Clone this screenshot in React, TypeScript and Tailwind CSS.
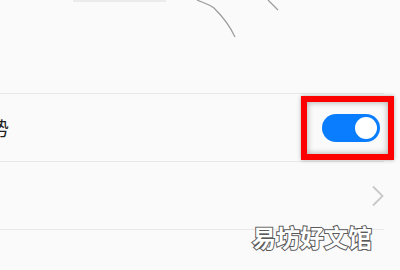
export default function App() {
    return (
        <div className="relative w-[400px] h-[270px] overflow-hidden bg-[#fafafa] font-['Noto_Sans_CJK_SC','Noto_Sans',sans-serif]">
            {/* top illustration fragment */}
            <div className="relative h-[93px]">
                <div className="absolute left-[73px] top-0 w-[93px] h-[2px] bg-[#ebebeb]" />
                <svg className="absolute left-0 top-0" width="400" height="93" viewBox="0 0 400 93" fill="none">
                    <path d="M197 0 C204 3 210 5 214 8 C222 16 230 26 235 37" stroke="#9a9a9a" strokeWidth="1.2" />
                    <path d="M268 0 L278 10" stroke="#9a9a9a" strokeWidth="1.2" />
                </svg>
            </div>

            <div className="pr-[16px]">
                <div className="flex items-center justify-between h-[68px] border-t border-[#e8e8e8]">
                    <span className="-ml-[29px] text-[19px] text-[#222] leading-none">趋势</span>
                    <div className="flex items-center justify-center w-[93px] h-[64px] mr-[-10px] pl-[7px] border-[6px] border-[#f00] shadow-[inset_0_0_6px_rgba(0,0,0,0.35),0_0_4px_rgba(0,0,0,0.3)]">
                        <div className="flex items-center justify-end w-[58px] h-[28px] rounded-full bg-[#0a7dff] px-[3px]">
                            <div className="w-[22px] h-[22px] rounded-full bg-white" />
                        </div>
                    </div>
                </div>
                <div className="flex items-center justify-end h-[68px] border-t border-[#e8e8e8]">
                    <svg width="14" height="22" viewBox="0 0 14 22" fill="none" className="-mr-[1px]">
                        <path d="M2 1.5 L11.5 11 L2 20.5" stroke="#c8c8c8" strokeWidth="1.8" />
                    </svg>
                </div>
                <div className="border-t border-[#e8e8e8]" />
            </div>

            <span className="absolute left-[252px] top-[225px] text-[24px] font-bold leading-none text-white [-webkit-text-stroke:2px_#5a5a5a] [paint-order:stroke_fill]">
                易坊好文馆
            </span>
        </div>
    )
}
